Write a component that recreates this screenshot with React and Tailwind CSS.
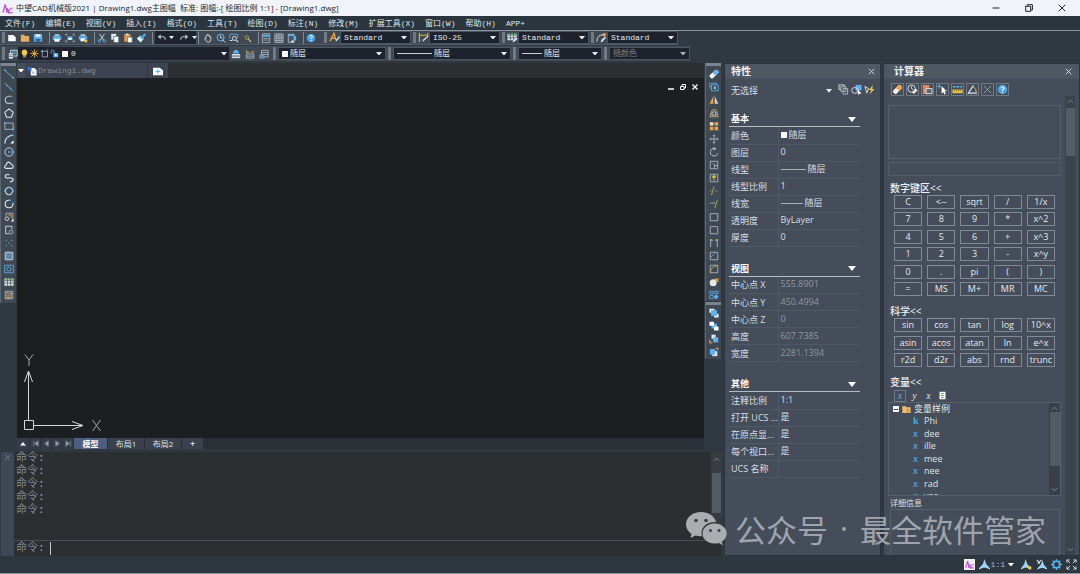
import clsx from "clsx";

const W = "#dde5ec";
const B = "#5db2f0";
const O = "#eba546";
const Y = "#f0c53c";
const G = "#b4bdc6";

// every glyph is drawn on a 12x12 grid
const ICONS = {
  newFile: <path d="M1.5 2.5h6l3 2.5v5h-9z" fill="#fff" />,
  open: <path d="M1 2h4l1 1.5h5V10.500H1z" fill="#e9a95f" />,
  save: (
    <>
      <path d="M1 1.500h10v9H1z" fill={B} />
      <path d="M3 1.500h6v3H3z" fill="#e8f2fa" />
      <path d="M3 7h6v3.500H3z" fill="#3b5f8a" />
    </>
  ),
  print: (
    <>
      <path d="M3 1.500h6V4H3z" fill="#9dcdf4" />
      <path d="M1 4h10v4.500H1z" fill={B} />
      <path d="M3 7h6v3.500H3z" fill="#fff" />
    </>
  ),
  preview: (
    <>
      <path d="M1 3.500V1.500h2M9 1.500h2v2M11 8.500v2H9M3 10.500H1v-2" stroke={G} fill="none" />
      <path d="M3 4h6v4.500H3z" fill={B} />
      <path d="M4 6h4v2H4z" fill="#fff" />
    </>
  ),
  plot: (
    <>
      <path d="M3 1.500h6V4H3z" fill="#9dcdf4" />
      <path d="M1 4h10v4H1z" fill={B} />
      <path d="M3 6.500h5v3.500H3z" fill="#fff" />
      <circle cx="9.500" cy="9.500" r="1.800" fill={Y} />
    </>
  ),
  cut: (
    <>
      <path d="M3 1l5 7.500M9 1L4 8.500" stroke={W} fill="none" />
      <circle cx="3" cy="9.500" r="1.500" stroke={B} fill="none" />
      <circle cx="9" cy="9.500" r="1.500" stroke={B} fill="none" />
    </>
  ),
  copy: (
    <>
      <path d="M1.500 1h6v7h-6z" fill="#e4ebf1" />
      <path d="M4.500 4h6v7.500h-6z" fill="#fff" stroke="#4b5562" strokeWidth=".8" />
    </>
  ),
  paste: (
    <>
      <path d="M1.500 1.500h7.500v9H1.500z" fill="#e59a52" />
      <path d="M3.500.8h3v1.700h-3z" fill="#fff" />
      <path d="M5.500 5h5.500v6.500H5.500z" fill="#fff" stroke="#4b5562" strokeWidth=".7" />
    </>
  ),
  brush: (
    <>
      <path d="M7 3.500l3.500-3L12 2 9 5.500z" fill={B} />
      <path d="M5 3l4.500 4-4 4.500-4.500-5z" fill="#eaf4fc" />
      <path d="M5 3l4.500 4-1.300 1.500-4.700-4.200z" fill={B} />
    </>
  ),
  undo: (
    <>
      <path d="M1 5l4-3.500v7z" fill="#b5bec6" />
      <path d="M4 5h4q3 0 3 4" stroke="#b5bec6" strokeWidth="1.500" fill="none" />
    </>
  ),
  redo: (
    <>
      <path d="M11 5L7 1.500v7z" fill="#b5bec6" />
      <path d="M8 5H4Q1 5 1 9" stroke="#b5bec6" strokeWidth="1.500" fill="none" />
    </>
  ),
  pan: (
    <path
      d="M3.500 7V3.500q.7-1 1.400 0V2q.8-1 1.500 0v1q.8-1 1.500 0v1.500q.8-.8 1.400 0V8q0 3-2.500 3H6Q4.500 11 2 7q.3-1 1.500 0z"
      stroke={W}
      fill="none"
    />
  ),
  orbit: (
    <>
      <circle cx="5.500" cy="5.500" r="4" stroke={B} strokeWidth="1.300" fill="none" />
      <path d="M5.500 3v3h2.500M8.500 8.500L11 11.500" stroke={W} fill="none" />
    </>
  ),
  zoomWin: (
    <>
      <path d="M1 7V1.500h9.500V6" stroke={B} fill="none" />
      <circle cx="6.500" cy="6.500" r="2.500" stroke={W} fill="#4d5865" />
      <path d="M8.500 8.500l2.500 2.500M1 9h3" stroke={W} strokeWidth="1.300" fill="none" />
    </>
  ),
  zoomPrev: (
    <>
      <path d="M1 2l2.500 2.500" stroke="#8a949e" strokeDasharray="1 1" fill="none" />
      <circle cx="6" cy="5.500" r="2" stroke="#b9a950" fill="none" />
      <path d="M7.500 7L11 11" stroke="#cfc48b" strokeWidth="1.300" fill="none" />
    </>
  ),
  calc: (
    <>
      <path d="M1.500 1h9v10.500h-9z" stroke={G} fill="#3a4653" />
      <path d="M2.500 2h7v2.500h-7z" fill={B} />
      <path d="M3 6.500h6M3 8.500h6" stroke={W} strokeDasharray="1.500 .8" />
    </>
  ),
  grid: (
    <path d="M1 1h10v10.500H1zM1 3.600h10M1 6.200h10M1 8.800h10M3.500 1v10.500M6 1v10.500M8.500 1v10.500" stroke="#c8d0d8" strokeWidth=".8" fill="none" />
  ),
  palette: (
    <>
      <path d="M1.500 1.500h7v10h-7z" stroke={G} fill="#46586c" />
      <path d="M1.500 1.500h7v2h-7z" fill={B} />
      <path d="M8.500 3.500h2.500v5.500H8.500z" fill={B} />
      <path d="M5 9h3v2H5z" fill={W} />
    </>
  ),
  help: (
    <>
      <circle cx="6" cy="6" r="5.200" fill="#49a3ea" />
      <path d="M4.300 4.700q.2-1.700 1.800-1.700T7.800 4.600Q7.800 5.500 6 6.500v.8M6 8.300v1.200" stroke="#fff" fill="none" strokeWidth="1.200" />
    </>
  ),
  textStyle: (
    <>
      <path d="M1 10L5.500 1.500l1.800 7M3 7h4" stroke={O} strokeWidth="1.500" fill="none" />
      <path d="M7 11l1-3 3-3.500 1 1-2.800 3.500z" fill={W} />
    </>
  ),
  dimStyle: (
    <>
      <path d="M1.500 1v10M10.500 1v4M1.500 3.500h9" stroke={Y} fill="none" />
      <path d="M4.500 11l1.500-3 4.500-4 1 1-4.500 4z" fill={W} />
    </>
  ),
  tableStyle: (
    <>
      <path d="M.5 2h10v7H.5z" fill="#dde5ec" />
      <path d="M.5 2h10v2H.5z" fill="#6aa86c" />
      <path d="M.5 6.300h10M3.800 2v7M7.200 2v7" stroke="#4b5562" strokeWidth=".8" />
      <path d="M6 11.500l1-2.500 3.500-3 1.200 1L8.500 10z" fill="#fff" stroke="#4b5562" strokeWidth=".3" />
    </>
  ),
  leaderStyle: (
    <>
      <path d="M1 10.500Q1 3 8 3" stroke={W} fill="none" />
      <circle cx="9" cy="3" r="2" fill={O} />
      <path d="M5 11.500l1-3 4-3.500 1 1L7.500 10z" fill={W} />
    </>
  ),
  layers: (
    <>
      <path d="M3 1.500h8v7H3z" stroke={W} fill="#4a5662" />
      <path d="M4.500 3.500h5M4.500 5.500h5" stroke={B} />
      <path d="M1 5h5v6.500H1z" fill="#dfe7ee" />
      <path d="M1 7h5M1 9h5" stroke="#4a5662" strokeWidth=".8" />
    </>
  ),
  bulb: (
    <>
      <path d="M6 .8a4 4 0 0 1 2.200 7.200V9H3.800V8A4 4 0 0 1 6 .8z" fill="#f3cd45" />
      <path d="M4.200 9.500h3.600v1.700H4.200z" fill="#c99a2c" />
    </>
  ),
  sun: (
    <>
      <path d="M6 .5v11M.5 6h11M2 2l8 8M10 2l-8 8" stroke="#e2a93c" strokeWidth="1.200" />
      <circle cx="6" cy="6" r="2.800" fill="#e2a93c" stroke="#33363a" strokeWidth=".6" />
    </>
  ),
  freeze: <path d="M3 3h7v7.500H3zM1 3h3M3 1v3M8.500 1.500H11" stroke={G} fill="none" />,
  unlock: (
    <>
      <path d="M1.500 6V3.500q0-2 2-2t2 2V6" stroke={B} strokeWidth="1.300" fill="none" />
      <path d="M4.500 5.500h6.500V11H4.500z" fill={B} />
      <circle cx="7.700" cy="8" r="1.200" fill="#fff" />
    </>
  ),
  layerSet: (
    <>
      <path d="M1 6h10v5H1z" fill="#cfd9e2" />
      <path d="M1 8.500h10" stroke="#4a5662" />
      <path d="M2.500 5.500q0-4 3.500-4.500 3.500.5 3.500 4.500z" fill={B} />
    </>
  ),
  layerPrev: (
    <>
      <path d="M1.500 6h9v5h-9zM1.500 8.500h9" stroke={G} fill="none" />
      <path d="M2 1.500v2.500h3M7 3.500h4" stroke={Y} fill="none" />
    </>
  ),
  layerState: (
    <>
      <path d="M3 1.500h8v8H3zM3 4h8M3 6.500h8" stroke={G} fill="none" />
      <path d="M1 7h5v4H1z" fill="#5682ab" stroke={G} strokeWidth=".6" />
    </>
  ),
  line: (
    <>
      <path d="M1 1.500l10 9" stroke="#73b9d8" />
      <path d="M0 .5h2v2H0zM10 9.500h2v2h-2z" fill={B} />
    </>
  ),
  xline: (
    <>
      <path d="M1 1.500l10 9.500" stroke="#73b9d8" />
      <path d="M3 3.500h1.600v1.600H3zM7 7h1.600v1.600H7z" fill={B} />
    </>
  ),
  pline: (
    <>
      <path d="M9.500 1.500H6Q1.500 2 1.500 6t4 4h5" stroke={G} strokeWidth="1.400" fill="none" />
      <path d="M9 9h2.500v2H9z" fill={B} />
    </>
  ),
  polygon: <path d="M6 1l5 4-2 6H3L1 5z" stroke={W} strokeWidth="1.300" fill="none" />,
  rect: (
    <>
      <path d="M1 2.500h10v7.500H1z" stroke={G} fill="none" />
      <path d="M0 1.500h2.300v2H0zM9.500 9H12v2H9.500z" fill={B} />
    </>
  ),
  arc: (
    <>
      <path d="M1 11Q1.500 2.500 10.500 1.500" stroke={W} strokeWidth="1.300" fill="none" />
      <path d="M0 9.500h2v2H0zM3.500 3h2v2h-2zM9.500 .5h2v2h-2z" fill={B} />
      <path d="M11.500 7.500v4h-4z" fill="#fff" />
    </>
  ),
  circle: (
    <>
      <circle cx="6" cy="6" r="5" stroke={W} fill="none" />
      <path d="M5 5h2v2H5zM10 5h2v2h-2z" fill={B} />
      <path d="M6 6h5" stroke={B} />
    </>
  ),
  cloud: (
    <path d="M2.500 10Q0 9.500 1 7.500 1.500 6 3 5.800 3 2.500 5.500 2.500T8.500 5q3 1 2.500 3 0 2-2 2z" stroke={W} strokeWidth="1.300" fill="none" />
  ),
  spline: <path d="M6.500 2Q1 1 1.500 4.500 2 6.500 6 6t5 1.500q0 3-4 3" stroke={W} strokeWidth="1.400" fill="none" />,
  ellipse: (
    <>
      <circle cx="6" cy="6" r="4.300" stroke={W} strokeWidth="1.300" fill="none" />
      <path d="M0 5h2.500v2H0zM9.500 5H12v2H9.500zM5 .5h2v2H5zM5 9.500h2v2H5z" fill={B} />
    </>
  ),
  ellipseArc: (
    <>
      <path d="M6 1.500Q1.500 1.500 1.500 6T6 10.500 10.500 6" stroke={W} strokeWidth="1.300" fill="none" />
      <path d="M5.500.5h2.500v2H5.500zM9.500 4.500H12v2H9.500z" fill={B} />
    </>
  ),
  insert: (
    <>
      <path d="M2.500 5V1.500h8v8" stroke={G} fill="none" />
      <path d="M5 3.500h3.500V7" stroke={O} fill="none" />
      <circle cx="3.500" cy="8" r="2.200" stroke={W} fill="none" />
      <path d="M11.500 8v3.500H8z" fill="#fff" />
    </>
  ),
  block: (
    <>
      <path d="M6 10.500H2V1.500h7.500V5" stroke={W} fill="none" />
      <circle cx="8.500" cy="8.500" r="2.300" stroke={G} fill="none" />
    </>
  ),
  points: (
    <path d="M2 2h1.500v1.500H2zM8.500 2H10v1.500H8.500zM5.200 5.200h1.600v1.600H5.200zM2 8.500h1.500V10H2zM8.500 8.500H10V10H8.500z" fill="#45a9a0" />
  ),
  hatch: (
    <>
      <path d="M1.500 1.500h9v9h-9z" stroke={W} fill="#5c7f9e" />
      <path d="M2 6l4-4M2 10l8-8M6 10l4-4" stroke="#8cb4d3" strokeWidth=".7" />
    </>
  ),
  region: (
    <>
      <path d="M.8 1.500h10.400v9H.8z" stroke={B} fill="none" />
      <circle cx="6" cy="6" r="2.500" stroke={B} fill="none" />
    </>
  ),
  table: (
    <>
      <path d="M.5 2h11v8.500H.5z" fill="#dfe6e4" />
      <path d="M.5 2h11v2.200H.5z" fill="#93b98d" />
      <path d="M.5 4.500h11M.5 7.300h11M4.200 2v8.500M7.800 2v8.500" stroke="#3f4954" strokeWidth=".8" />
    </>
  ),
  mtext: (
    <>
      <path d="M1.500 1.500h9v9h-9z" stroke={G} fill="#59636e" />
      <path d="M3 5l1.500-2L6 5M3 7h6M3 9h6" stroke={O} fill="none" strokeWidth=".9" />
      <path d="M7 4.500h2.500" stroke={W} />
    </>
  ),
  erase: (
    <g transform="rotate(-42 6 6)">
      <rect x="0" y="3.500" width="12" height="5.200" rx="2" fill="#fff" />
      <path d="M6 3.500h4q2 0 2 2v1.200q0 2-2 2H6z" fill={B} />
    </g>
  ),
  offset: (
    <>
      <path d="M1 8V1.500h8V3" stroke={B} fill="none" />
      <path d="M3 3.500h8v7H3z" stroke={B} fill="none" />
      <path d="M5.500 5.500h3v3h-3z" fill="#79bff0" />
    </>
  ),
  mirror: (
    <>
      <path d="M5 1.500V10.500H.8z" fill={O} />
      <path d="M7 1.500V10.500h4.200z" fill="#d9d2c5" />
      <path d="M6 .5v11" stroke="#8b949d" strokeWidth=".6" />
    </>
  ),
  offset2: (
    <>
      <path d="M1 10.500L3.500 3Q6 0 9 3l2 7.500z" stroke="#d7b765" fill="none" />
      <path d="M3.500 8.500V7Q4 4.500 6 4.300T8.500 7v1.500z" stroke={W} fill="none" />
    </>
  ),
  array: (
    <>
      <path d="M1 1.500h4.300v4H1z" fill="#f3e2c5" />
      <path d="M6.700 1.500H11v4H6.700zM1 7h4.300v4H1zM6.700 7H11v4H6.700z" fill={O} />
    </>
  ),
  move: (
    <path d="M6 1v10M1 6h10M4.500 2.500L6 1l1.500 1.500M4.500 9.500L6 11l1.500-1.500M2.500 4.500L1 6l1.500 1.500M9.500 4.500L11 6 9.500 7.500" stroke={G} fill="none" />
  ),
  rotate: (
    <>
      <path d="M7 1.800A4.500 4.500 0 1 0 10.500 7.500" stroke={G} strokeWidth="1.200" fill="none" />
      <path d="M5.500 0l3.500 2L5.500 4.500z" fill={G} />
    </>
  ),
  scale: <path d="M1.500 1.500h9v9h-9zM10.500 6.500H6.500v4M4.500 4l3.500 3.500" stroke={G} fill="none" />,
  stretch: (
    <>
      <path d="M1.500 1.500h9v9h-9z" stroke={G} fill="none" />
      <path d="M6 9V3.500M3.700 5.500L6 3l2.300 2.500" stroke="#d9d04a" strokeWidth="1.300" fill="none" />
    </>
  ),
  trim: (
    <>
      <path d="M6 1L3 11" stroke="#c8b84e" />
      <path d="M1 6h3M7 6h4" stroke="#9aa5ae" strokeDasharray="2 1" />
    </>
  ),
  extend: (
    <>
      <path d="M10 1L7 11" stroke="#c8b84e" />
      <path d="M1 5h6M5 3.500L7.500 5" stroke="#9aa5ae" />
    </>
  ),
  breakAt: <path d="M1.500 2h9v8.500h-9z" stroke={G} fill="none" />,
  breakTwo: (
    <>
      <path d="M1.500 2h9v8.500h-9z" stroke={G} fill="none" />
      <path d="M1 1.500h1.500V3H1zM9.500 9.500H11V11H9.500z" fill="#d26a75" />
    </>
  ),
  join: (
    <>
      <path d="M2 11V3h2.500M10 11V3H7.500" stroke={G} fill="none" />
      <path d="M1 2h3M8 2h3" stroke="#c8b84e" strokeWidth="1.300" />
    </>
  ),
  chamfer: (
    <>
      <path d="M1.500 1.500h9v9h-9z" stroke={G} fill="none" />
      <path d="M1.500 8l7-6.500" stroke="#7ba5c4" />
    </>
  ),
  fillet: (
    <>
      <path d="M1.500 1.500h9v9h-9z" stroke={G} fill="none" />
      <path d="M1.500 10.500Q2 3 10 2" stroke="#c8a84e" fill="none" />
    </>
  ),
  explode: (
    <>
      <circle cx="5" cy="7" r="4.200" fill="#e3e6e4" />
      <path d="M7 3.500l1-2.500 1.200 1.500L12 1.500 10.800 4 12 6 9.500 5.500z" fill={O} />
    </>
  ),
  blockEdit: (
    <>
      <path d="M1 1.500h4v3H1zM7 1.500h4v3H7zM1 6.500h4v4H1z" stroke={B} fill="none" />
      <path d="M5.500 8l3-3 3 3-3 3.500z" fill={B} />
    </>
  ),
  front: (
    <>
      <path d="M.5 .8h6v5h-6zM6 7h5.500v4.500H6z" fill="#e9f1f8" />
      <path d="M2.500 2.500h7v7h-7z" fill={B} />
    </>
  ),
  back: (
    <>
      <path d="M3 3h6.500v6H3z" fill={B} />
      <path d="M.5 .8h5.500v5H.5zM6 6.500h5.500v5H6z" fill="#fff" />
    </>
  ),
  above: (
    <>
      <path d="M3 .8h5v5H3z" fill={W} />
      <path d="M5 4h6v6H5z" fill={B} />
      <path d="M1 7v3.500h3" stroke={O} fill="none" strokeWidth="1.300" />
    </>
  ),
  below: (
    <>
      <path d="M4 5h6v6H4z" fill={W} />
      <path d="M1 2.500h6.500V9H1z" fill={B} />
      <path d="M8 1.500h2.500V4" stroke={O} fill="none" strokeWidth="1.300" />
    </>
  ),
  quick: (
    <>
      <path d="M1 1h6v5H1z" stroke={W} fill="none" />
      <path d="M3 3h5.500v5H3zM5.500 5h5v6h-5z" stroke={G} fill="#47515d" />
    </>
  ),
  pick: (
    <>
      <path d="M5 1h6.500v6H5z" fill={B} />
      <circle cx="4" cy="7" r="3.200" stroke={W} fill="none" />
      <path d="M7.500 6l4 4.500H9L7.500 12z" fill="#fff" />
    </>
  ),
  flash: (
    <>
      <path d="M1 2.500l5 3.500-2 .6L3 10z" stroke={W} fill="none" />
      <path d="M9.500 1L5.500 6.500h2.500L6 11.500l5.500-6H9z" fill={Y} />
    </>
  ),
  clear: (
    <g transform="rotate(-45 6 6)">
      <rect x=".5" y="3.500" width="11" height="5" rx="1.500" fill="#f5f1ea" />
      <path d="M6 3.500h4q1.500 0 1.500 1.500v2q0 1.500-1.500 1.500H6z" fill={O} />
    </g>
  ),
  history: (
    <>
      <circle cx="5" cy="5" r="4" stroke={W} fill="none" />
      <path d="M5 2.500V5l2 1" stroke={W} fill="none" />
      <path d="M5.500 9L9.500 5l2 2-4 4z" fill="#f2e8da" />
    </>
  ),
  pasteCmd: (
    <>
      <path d="M1 1h7v10H1z" fill="#d98a5e" />
      <path d="M4.500 5H11v5.500H4.500z" fill="#5b6672" stroke={W} />
    </>
  ),
  coord: (
    <>
      <path d="M2.500 0v5M0 2.500h5" stroke={B} />
      <path d="M5 2.500l6 5.500H8.500l1 3-1.500.5L7 8.800 5 10.500z" fill="#fff" />
    </>
  ),
  dist: (
    <>
      <path d="M1 3h10" stroke={B} strokeDasharray="3 1" strokeWidth="1.500" />
      <path d="M.5 6h11v4H.5z" fill={Y} />
      <path d="M3 6v2M5 6v2M7 6v2M9 6v2" stroke="#5a4a1a" strokeWidth=".7" />
    </>
  ),
  angle: (
    <>
      <path d="M7 1.500L1.500 10H11" stroke={W} fill="none" strokeWidth="1.300" />
      <path d="M7 3q3.500 2.500 3 6" stroke={Y} fill="none" />
    </>
  ),
  cross: <path d="M2 2l8 8M10 2l-8 8" stroke="#9aa4ae" fill="none" />,
  doc: (
    <>
      <path d="M4.500 2.500H9l2.500 2.500v6.500h-7z" fill="#fff" />
      <path d="M0 1.500h5.500v4.500H2z" fill="#2f6fe0" />
      <path d="M6 6.500h3v3H6z" fill="#a9c9ee" />
    </>
  ),
  newTab: (
    <>
      <path d="M0 2h8l4 3v6H0z" fill="#fff" />
      <path d="M6 4v5M3.500 6.500h5" stroke={B} strokeWidth="1.300" />
    </>
  ),
  folder: (
    <>
      <path d="M.5 1.500h4.500l1 1.500h5.500v7.500H.5z" fill="#efbe6a" />
      <path d="M6 5h4v5H6z" fill="#d69d45" />
    </>
  ),
  listDoc: (
    <>
      <path d="M2 1h8v10H2z" fill="#fff" />
      <path d="M4 3.500h4M4 6h4M4 8.500h4" stroke="#65707c" />
    </>
  ),
  scaleMark: (
    <path d="M6 0l1.800 5.500L12 10v1.500L7.500 9.500H4.500L0 11.500V10l4.200-4.500z" fill="#9fd2f5" />
  ),
  scaleVis: (
    <>
      <path d="M5 0l1.800 5.500L11 10v1.500L6.500 9.500H4L0 11.500V10l3.500-4.500z" fill="#9fd2f5" />
      <circle cx="9.500" cy="9.500" r="2" fill={Y} />
    </>
  ),
  scaleAuto: (
    <>
      <path d="M7 1l1.500 5L12 10v1.500L8 9.800H5.500L1.500 11.500V10L5.300 6z" fill="#9fd2f5" />
      <path d="M1 1l3 4M6 1L2 5" stroke={W} strokeWidth="1.200" />
    </>
  ),
  gear: (
    <>
      <circle cx="6" cy="6" r="3.600" stroke="#4fb0f3" strokeWidth="2" fill="none" />
      <path d="M6 0v2M6 10v2M0 6h2M10 6h2M1.800 1.800l1.400 1.400M8.800 8.800l1.400 1.400M10.200 1.800L8.800 3.200M3.200 8.800l-1.400 1.400" stroke="#4fb0f3" strokeWidth="1.500" />
    </>
  ),
  full: (
    <path d="M1 4V1h3M8 1h3v3M11 8v3H8M4 11H1V8M1 1l3.500 3.500M11 1L7.500 4.500M11 11L7.500 7.500M1 11l3.500-3.500" stroke={W} fill="none" />
  ),
};

function Icon({ name, className = "size-[11px]" }) {
  return (
    <svg viewBox="0 0 12 12" className={clsx("shrink-0 block", className)} aria-hidden="true">
      {ICONS[name]}
    </svg>
  );
}

function Logo({ className }) {
  return (
    <svg viewBox="0 0 12 12" className={className} aria-hidden="true">
      <path d="M1 10.500L3.500 1.500 5 8V10.500M5.500 5.500L7 10.500l1.500-4M8 10.500h3.500" stroke="#b94bdc" strokeWidth="1.400" fill="none" />
      <path d="M1 6.500h4M8.500 6.500l2.500-1v2.500" stroke="#e57ae0" strokeWidth="1.100" fill="none" />
    </svg>
  );
}

function Tri({ className = "w-[6px] text-[#e3e9ee]" }) {
  return (
    <svg viewBox="0 0 8 5" className={clsx("shrink-0 pointer-events-none", className)} aria-hidden="true">
      <path d="M0 0h8L4 5z" fill="currentColor" />
    </svg>
  );
}

function IconButton({ name, className, size }) {
  return (
    <button type="button" aria-label={name} className={clsx("flex items-center justify-center", className)}>
      <Icon name={name} className={size} />
    </button>
  );
}

function Tools({ names, className }) {
  return (
    <div className={clsx("flex items-center", className)}>
      {names.map((n) => (
        <IconButton key={n} name={n} className="w-[13px] h-[13px]" size="size-[10px]" />
      ))}
    </div>
  );
}

function Sep() {
  return <span className="w-px h-3 ml-[5px] bg-[#7d8893]" />;
}

function Grip() {
  return <span className="w-[3px] self-stretch my-px mx-[2px] bg-[#6f7a86]" />;
}

function Combo({ label, value, line, swatch, disabled, className }) {
  return (
    <label
      className={clsx(
        "flex items-center h-[13px] px-[3px] border border-[#4b5560] bg-[#1d222d]",
        disabled ? "text-[#7c848d]" : "text-[#e3e9ee]",
        className
      )}
    >
      {swatch && <span className="size-[6px] mr-[2px] bg-white shrink-0" />}
      {line && <span className={clsx("h-px mr-[2px] bg-[#c9d0d6] shrink-0", line)} />}
      <select aria-label={label} disabled={disabled} className="appearance-none flex-1 min-w-0 leading-[11px] outline-none">
        <option>{value}</option>
      </select>
      <Tri className={clsx("w-[6px]", disabled ? "text-[#a7aeb5]" : "text-[#e3e9ee]")} />
    </label>
  );
}

const MENUS = [
  "文件(F)", "编辑(E)", "视图(V)", "插入(I)", "格式(O)", "工具(T)", "绘图(D)", "标注(N)",
  "修改(M)", "扩展工具(X)", "窗口(W)", "帮助(H)", "APP+",
];

const DRAW = [
  "line", "xline", "pline", "polygon", "rect", "arc", "circle", "cloud", "spline", "ellipse",
  "ellipseArc", "insert", "block", "points", "hatch", "region", "table", "mtext",
];

const MODIFY = [
  "erase", "offset", "mirror", "offset2", "array", "move", "rotate", "scale", "stretch", "trim",
  "extend", "breakAt", "breakTwo", "join", "chamfer", "fillet", "explode", "blockEdit",
];

const SECTIONS = [
  {
    title: "基本",
    rows: [
      { name: "颜色", value: "随层", swatch: true },
      { name: "图层", value: "0" },
      { name: "线型", value: "随层", line: "w-[25px]" },
      { name: "线型比例", value: "1" },
      { name: "线宽", value: "随层", line: "w-[22px]" },
      { name: "透明度", value: "ByLayer" },
      { name: "厚度", value: "0" },
    ],
  },
  {
    title: "视图",
    dim: true,
    rows: [
      { name: "中心点 X", value: "555.8901" },
      { name: "中心点 Y", value: "450.4994" },
      { name: "中心点 Z", value: "0" },
      { name: "高度", value: "607.7385" },
      { name: "宽度", value: "2281.1394" },
    ],
  },
  {
    title: "其他",
    rows: [
      { name: "注释比例", value: "1:1" },
      { name: "打开 UCS ...", value: "是" },
      { name: "在原点显...", value: "是" },
      { name: "每个视口...", value: "是" },
      { name: "UCS 名称", value: "" },
    ],
  },
];

const NUM_KEYS = [
  "C", "<--", "sqrt", "/", "1/x",
  "7", "8", "9", "*", "x^2",
  "4", "5", "6", "+", "x^3",
  "1", "2", "3", "-", "x^y",
  "0", ".", "pi", "(", ")",
  "=", "MS", "M+", "MR", "MC",
];

const SCI_KEYS = [
  "sin", "cos", "tan", "log", "10^x",
  "asin", "acos", "atan", "ln", "e^x",
  "r2d", "d2r", "abs", "rnd", "trunc",
];

const VARS = ["Phi", "dee", "ille", "mee", "nee", "rad", "vee"];

function TitleBar() {
  return (
    <header className="flex items-center h-4 pl-[2px] pr-[14px] bg-[#f0f4fa] text-[#23272c] text-[8px] leading-4">
      <Logo className="size-[11px] mr-[3px]" />
      <h1 className="flex-1 whitespace-pre">
        中望CAD机械版2021 | Drawing1.dwg主图幅  标准: 图幅:-[ 绘图比例 1:1] - [Drawing1.dwg]
      </h1>
      <div className="flex items-center gap-[25px]">
        <button type="button" aria-label="Minimize" className="w-2 flex justify-center">
          <svg viewBox="0 0 8 8" className="size-2"><path d="M0.500 4h7" stroke="#222" /></svg>
        </button>
        <button type="button" aria-label="Restore" className="w-2 flex justify-center">
          <svg viewBox="0 0 8 8" className="size-2">
            <path d="M.7 2.300h5v5h-5zM2.300 2V.7H7.400V6H6" stroke="#222" fill="none" />
          </svg>
        </button>
        <button type="button" aria-label="Close" className="w-2 flex justify-center">
          <svg viewBox="0 0 8 8" className="size-2"><path d="M.8.8l6.400 6.400M7.200.8L.8 7.200" stroke="#222" /></svg>
        </button>
      </div>
    </header>
  );
}

function MenuBar() {
  return (
    <nav className="flex items-center h-[15px] bg-[#2b353d] border-b border-[#8b959d] text-[8px] leading-[13px] text-[#dfe5ea] font-['Liberation_Mono','Noto_Sans_CJK_SC',monospace]">
      {MENUS.map((m) => (
        <button key={m} type="button" className="px-[5px] whitespace-nowrap">
          {m}
        </button>
      ))}
    </nav>
  );
}

function Toolbars() {
  return (
    <div className="text-[8px] font-['Liberation_Mono','Noto_Sans_CJK_SC',monospace] bg-[#303841] pb-[2px]">
      <div className="flex">
        <div className="flex items-center h-[14px] pr-[5px] bg-[#3f4954] border-b border-[#525d68]">
          <Grip />
          <Tools names={["newFile", "open", "save"]} className="-ml-[2px]" />
          <Sep />
          <Tools names={["print", "preview", "plot"]} />
          <Sep />
          <Tools names={["cut", "copy", "paste", "brush"]} />
          <Sep />
          <div className="flex items-center gap-[3px] h-[13px] w-[41px] mx-[2px] px-[2px] bg-[#1d222d]">
            <IconButton name="undo" size="size-[9px]" />
            <Tri className="w-[5px] text-[#e3e9ee]" />
            <span className="flex-1" />
            <IconButton name="redo" size="size-[9px]" />
            <Tri className="w-[5px] text-[#e3e9ee]" />
          </div>
          <span className="w-px h-3 mr-[2px] bg-[#7d8893]" />
          <Tools names={["pan", "orbit", "zoomWin", "zoomPrev"]} />
          <Sep />
          <Tools names={["calc", "grid", "palette"]} />
          <Sep />
          <Tools names={["help"]} />
        </div>
        {[
          ["textStyle", "Standard"],
          ["dimStyle", "ISO-25"],
          ["tableStyle", "Standard"],
          ["leaderStyle", "Standard"],
        ].map(([icon, value]) => (
          <div key={icon} className="flex items-center h-[14px] bg-[#3f4954] border-b border-[#525d68]">
            <Grip />
            <Icon name={icon} className="size-[11px]" />
            <Combo label={icon} value={value} className="w-[71px]" />
          </div>
        ))}
      </div>
      <div className="flex mt-px">
        <div className="flex items-center h-[15px] pr-px bg-[#3f4954]">
          <Grip />
          <IconButton name="layers" size="size-[10px]" className="w-[11px]" />
          <div className="flex items-center h-[13px] w-[211px] px-[2px] gap-px bg-[#1d222d]">
            {["bulb", "sun", "freeze", "unlock"].map((n) => (
              <IconButton key={n} name={n} size="size-[9px]" />
            ))}
            <span className="size-[6px] ml-[2px] mr-[2px] bg-white" />
            <select aria-label="Layer" className="appearance-none flex-1 text-[#e3e9ee] outline-none">
              <option>0</option>
            </select>
            <Tri />
          </div>
          <Tools names={["layerSet", "layerPrev", "layerState"]} className="gap-px" />
        </div>
        <div className="flex items-center h-[15px] bg-[#3f4954]">
          <Grip />
          <Combo label="Color" value="随层" swatch className="w-[108px]" />
          <Grip />
          <Combo label="Linetype" value="随层" line="w-[35px]" className="w-[118px]" />
          <Grip />
          <Combo label="Lineweight" value="随层" line="w-[20px]" className="w-[84px]" />
          <Grip />
          <Combo label="Plot style" value="随颜色" disabled className="w-[81px]" />
        </div>
      </div>
    </div>
  );
}

function SideTools({ names, className }) {
  return (
    <div className={clsx("flex flex-col items-center border-l border-[#5c6772] bg-[#3f4954]", className)}>
      <span className="h-[3px] self-stretch mb-px bg-[#7a8590]" />
      {names.map((n) => (
        <IconButton key={n} name={n} className="w-[13px] h-[13px]" size="size-[10px]" />
      ))}
    </div>
  );
}

function Ucs() {
  return (
    <svg viewBox="0 0 84 84" className="size-[84px]" aria-label="UCS">
      <g stroke="#d4d8db" fill="none">
        <path d="M4.500 66.500h9v9h-9zM8.500 66V18M14 71.500h48M8.500 17L4.500 28M8.500 17l4 11M63 71.500L52 67.500M63 71.500L52 75.500" />
        <path d="M5 .5L9 6l4-5.500M9 6v6M72.500 66l8 11M80.500 66l-8 11" stroke="#a3a8ac" />
      </g>
    </svg>
  );
}

function Drawing() {
  return (
    <section className="flex-1 min-w-0 flex flex-col bg-[#1b1f22]">
      <div className="flex h-[15px] bg-[#2b2f32] text-[8px] font-['Liberation_Mono',monospace]">
        <button type="button" aria-label="Drawings" className="w-[8px] flex items-center justify-center bg-[#454e5a]">
          <Tri className="w-[6px] text-white" />
        </button>
        <div className="flex items-center w-[123px] pl-[2px] gap-px bg-[#3d4350] border-r border-[#2f343e] text-[#858c94]">
          <Icon name="doc" className="size-[10px]" />
          <span>Drawing1.dwg</span>
        </div>
        <button type="button" aria-label="New drawing" className="w-[20px] flex items-center justify-center bg-[#3d4350]">
          <Icon name="newTab" className="size-[10px]" />
        </button>
      </div>
      <div className="flex-1 flex flex-col justify-between">
        <div className="flex justify-end gap-[6px] pt-[6px] pr-[6px]">
          <svg viewBox="0 0 6 6" className="size-[6px]"><path d="M0 5h6" stroke="#fff" strokeWidth="1.500" /></svg>
          <svg viewBox="0 0 6 6" className="size-[6px]">
            <path d="M.5 2.500h3.500v3H.5zM2 2V.5h3.500V4H4" stroke="#fff" fill="none" />
          </svg>
          <svg viewBox="0 0 6 6" className="size-[6px]"><path d="M.5.5l5 5M5.500.5l-5 5" stroke="#fff" strokeWidth="1.300" /></svg>
        </div>
        <div className="pl-[3px]">
          <Ucs />
        </div>
      </div>
      <div className="flex gap-px h-[11px] bg-[#2b2f36] text-[8px] leading-[11px] text-[#dfe4e9]">
        <button type="button" aria-label="Menu" className="w-[12px] flex items-center justify-center bg-[#363d48]">
          <Tri className="w-[6px] rotate-180 text-white" />
        </button>
        {["M2 1v6M7 1L3 4l4 3z", "M6 1L2 4l4 3z", "M2 1l4 3-4 3z", "M1 1l4 3-4 3zM6.500 1v6"].map((d) => (
          <button key={d} type="button" aria-label="Scroll tabs" className="w-[10px] flex items-center justify-center bg-[#363d48]">
            <svg viewBox="0 0 8 8" className="size-[7px]"><path d={d} fill="#8e98a3" stroke="#8e98a3" strokeWidth=".7" /></svg>
          </button>
        ))}
        <button type="button" className="w-[33px] bg-[#4c5f80] font-bold text-white">模型</button>
        <button type="button" className="w-[36px] bg-[#3a414d]">布局1</button>
        <button type="button" className="w-[36px] bg-[#3a414d]">布局2</button>
        <button type="button" className="w-[21px] bg-[#3a414d] font-bold">+</button>
      </div>
    </section>
  );
}

function Chevron({ up }) {
  return (
    <svg viewBox="0 0 8 8" className="size-[7px]" aria-hidden="true">
      <path d={up ? "M1 5.500l3-3 3 3" : "M1 2.500l3 3 3-3"} stroke="#87919b" fill="none" />
    </svg>
  );
}

function CommandLine() {
  return (
    <section className="flex h-[104px] mt-[3px] ml-px text-[11px] text-[#a9aeb3] font-['Liberation_Mono','Noto_Sans_CJK_SC',monospace]">
      <div className="w-[13px] pt-[2px] flex justify-center items-start bg-[#3d4854]">
        <button type="button" aria-label="Close command line">
          <svg viewBox="0 0 8 8" className="size-[7px]"><path d="M1 1l6 6M7 1L1 7" stroke="#7b8691" /></svg>
        </button>
      </div>
      <div className="flex-1 flex flex-col bg-[#2b2f31]">
        <div className="flex-1 flex">
          <ul className="flex-1 pl-[2px] leading-[13px] font-light">
            {[0, 1, 2, 3, 4].map((i) => (
              <li key={i}>命令:</li>
            ))}
          </ul>
          <div className="w-[10px] flex flex-col items-center pt-[4px] bg-[#363c41]">
            <Chevron up />
            <span className="w-[9px] h-[40px] mt-[10px] bg-[#505b64]" />
          </div>
        </div>
        <label className="flex items-center h-[16px] pl-[2px] border-t border-[#4a5056] font-light">
          命令:
          <span className="w-px h-[13px] ml-[5px] bg-[#c7ccd0]" />
          <input aria-label="命令" className="flex-1 outline-none" />
        </label>
      </div>
    </section>
  );
}

function PanelHeader({ title, className }) {
  return (
    <div className={clsx("flex items-center justify-between h-[15px] bg-[#4e5862] border-b border-[#4a5460]", className)}>
      <h2 className="text-[10px] leading-[14px] font-bold font-['Noto_Sans_CJK_SC',sans-serif] text-[#eef2f5]">{title}</h2>
      <button type="button" aria-label="Close">
        <svg viewBox="0 0 8 8" className="size-[7px]"><path d="M.8.8l6.400 6.400M7.200.8L.8 7.200" stroke="#e3e8ec" /></svg>
      </button>
    </div>
  );
}

function Properties() {
  return (
    <aside className="w-[157px] shrink-0 bg-[#444d59] border border-[#2b333b] text-[#d9dfe5] text-[9px]">
      <PanelHeader title="特性" className="pl-[6px] pr-[5px]" />
      <div className="flex items-center h-[24px] pl-[6px] pr-[5px]">
        <select aria-label="Selection" className="appearance-none flex-1 outline-none">
          <option>无选择</option>
        </select>
        <Tri />
        <div className="flex gap-[2px] pl-[6px] pb-[3px]">
          <IconButton name="quick" />
          <IconButton name="pick" />
          <IconButton name="flash" />
        </div>
      </div>
      <div className="pl-[4px] pr-[20px] -mt-[6px]">
        {SECTIONS.map((s) => (
          <section key={s.title} className="pt-[15px]">
            <h3 className="flex items-center justify-between h-[15px] pl-[2px] pr-[4px] border-b border-[#b4bcc3] text-[9px] font-bold text-white">
              {s.title}
              <Tri className="w-[8px] text-white" />
            </h3>
            <table className="w-full table-fixed border-collapse">
              <tbody>
                {s.rows.map((r) => (
                  <tr key={r.name} className="border-b border-[#4f5965]">
                    <th className="w-[49px] h-[17px] p-0 pl-[2px] border-r border-[#4f5965] font-normal text-left leading-[15px] whitespace-nowrap">
                      {r.name}
                    </th>
                    <td className={clsx("h-[17px] p-0 pl-[2px] pb-px leading-[14px]", s.dim && "text-[#8f98a2]")}>
                      <span className="flex items-center gap-[2px]">
                        {r.swatch && <span className="size-[6px] bg-white" />}
                        {r.line && <span className={clsx("h-px bg-[#aab2ba]", r.line)} />}
                        {r.value}
                      </span>
                    </td>
                  </tr>
                ))}
              </tbody>
            </table>
          </section>
        ))}
      </div>
    </aside>
  );
}

function Keys({ keys, className }) {
  return (
    <div className={clsx("grid grid-cols-5 gap-x-[5px] content-between mx-[6px]", className)}>
      {keys.map((k) => (
        <button key={k} type="button" className="h-[14px] border border-[#808a94] text-[9px] leading-[12px] text-[#e6ebef]">
          {k}
        </button>
      ))}
    </div>
  );
}

function KeyHeading({ children }) {
  return <h3 className="h-[14px] pl-[2px] text-[10px] leading-[14px] font-medium text-[#eef2f5]">{children}</h3>;
}

function Calculator() {
  return (
    <aside className="w-[197px] ml-[2px] shrink-0 flex flex-col bg-[#444d59] border border-[#2b333b] text-[#dfe5ea] text-[9px]">
      <PanelHeader title="计算器" className="pl-[10px] pr-[7px]" />
      <div className="flex-1 min-h-0 flex">
        <div className="w-[173px] ml-[4px] flex flex-col min-h-0">
          <div className="flex gap-[2px] pt-[4px] pl-[3px]">
            {["clear", "history", "pasteCmd", "coord", "dist", "angle", "cross", "help"].map((n) => (
              <IconButton key={n} name={n} className="size-[13px] border border-[#6f7983]" />
            ))}
          </div>
          <output className="h-[54px] mt-[9px] shrink-0 border border-[#56606a]" />
          <input aria-label="Expression" className="h-[14px] mt-[3px] shrink-0 border border-[#525c67] outline-none" />
          <div className="h-[5px] shrink-0" />
          <KeyHeading>数字键区&lt;&lt;</KeyHeading>
          <Keys keys={NUM_KEYS} className="h-[101px] shrink-0" />
          <div className="h-[8px] shrink-0" />
          <KeyHeading>科学&lt;&lt;</KeyHeading>
          <Keys keys={SCI_KEYS} className="h-[49px] shrink-0" />
          <div className="h-[8px] shrink-0" />
          <KeyHeading>变量&lt;&lt;</KeyHeading>
          <div className="flex items-center gap-[3px] h-[13px] pl-[6px] shrink-0 font-['Liberation_Serif',serif] italic text-[10px] leading-[10px]">
            <button type="button" className="size-[12px] border border-[#6f7983] text-[#58b0ea]">x</button>
            <button type="button" className="w-[11px]">y</button>
            <button type="button" className="w-[11px]">x</button>
            <IconButton name="listDoc" className="w-[11px]" size="size-[9px]" />
          </div>
          <div className="flex justify-between h-[94px] shrink-0 border border-[#56606a] overflow-hidden">
            <ul className="h-[99px] flex flex-col justify-between leading-[12px]">
              <li className="flex items-center h-3 pl-[4px] gap-[3px]">
                <button type="button" aria-label="Collapse" className="size-[6px] bg-white flex items-center">
                  <span className="w-[4px] h-px mx-auto bg-[#444d59]" />
                </button>
                <Icon name="folder" className="size-[9px]" />
                变量样例
              </li>
              {VARS.map((v, i) => (
                <li key={v} className="flex h-3 pl-[24px]">
                  <span className={clsx("w-[11px] text-[10px] font-bold text-[#4fa9e4] font-['Liberation_Serif',serif]", i > 0 && "italic")}>
                    {i > 0 ? "x" : "k"}
                  </span>
                  {v}
                </li>
              ))}
            </ul>
            <div className="w-[11px] flex flex-col items-center justify-between bg-[#383f48] pt-[2px] pb-[2px]">
              <Chevron up />
              <span className="w-[10px] h-[54px] -mt-[21px] bg-[#505b64]" />
              <Chevron />
            </div>
          </div>
          <h4 className="h-[13px] shrink-0 pl-[2px] text-[8px] leading-[13px]">详细信息</h4>
          <div className="flex-1 ml-[2px] mr-px border border-b-0 border-[#56606a]" />
        </div>
        <div className="w-[10px] ml-[4px] mt-[17px] py-[2px] flex flex-col items-center bg-[#3a424c]">
          <Chevron up />
          <span className="w-[9px] h-[48px] mt-[3px] bg-[#535e67]" />
          <span className="flex-1" />
          <Chevron />
        </div>
      </div>
    </aside>
  );
}

function StatusBar() {
  return (
    <footer className="flex items-center justify-end h-[18px] pr-[3px] bg-[#2e363f] border-b border-[#8d959c] text-[8px] text-[#b5bdc5] font-['Liberation_Mono',monospace]">
      <span className="size-[11px] bg-[#f4eefa] flex items-center justify-center">
        <Logo className="size-[9px]" />
      </span>
      <IconButton name="scaleMark" size="size-[11px]" className="ml-[4px]" />
      <span className="ml-px">1:1</span>
      <Tri className="w-[6px] ml-[3px] text-white" />
      <div className="flex gap-[4px] ml-[7px]">
        <IconButton name="scaleVis" size="size-[11px]" />
        <IconButton name="scaleAuto" size="size-[11px]" />
        <IconButton name="gear" size="size-[11px]" />
        <IconButton name="full" size="size-[11px]" />
      </div>
    </footer>
  );
}

function Watermark() {
  return (
    <div className="absolute right-[34px] bottom-[27px] flex items-center gap-[7px] pointer-events-none text-[#a8afb6] opacity-90">
      <svg viewBox="0 0 42 34" className="w-[42px] h-[34px]" aria-hidden="true">
        <path d="M15 0C6.500 0 0 5.500 0 12.500c0 4 2 7 5.500 9.500L4.500 26l5-2.500c2 .6 4 .9 6.500.8A11 11 0 0 1 15.500 21C15.500 14.500 21.500 10 29 10h1C28.500 4 22.500 0 15 0z" fill="#b7bbbe" />
        <path d="M28.500 11.500c-7 0-12 4.500-12 10s5 10 12 10c1.500 0 3-.2 4.300-.6l4 2.300-1-3.500c3.200-2 4.900-5 4.900-8.200 0-5.500-5.200-10-12.200-10z" fill="#b7bbbe" />
        <g fill="#3a424b">
          <circle cx="10" cy="8.500" r="1.800" />
          <circle cx="20" cy="8.500" r="1.800" />
          <circle cx="24.500" cy="18.500" r="1.500" />
          <circle cx="33" cy="18.500" r="1.500" />
        </g>
      </svg>
      <p className="flex items-center text-[31px] leading-[36px] font-['Noto_Sans_CJK_SC',sans-serif]">
        <span>公众号</span>
        <span className="size-[4px] mx-[14px] rounded-full bg-current" />
        <span>最全软件管家</span>
      </p>
    </div>
  );
}

export default function App() {
  return (
    <div className="relative flex flex-col h-screen overflow-hidden bg-[#303841] font-['Open_Sans','Noto_Sans_CJK_SC',sans-serif]">
      <TitleBar />
      <MenuBar />
      <Toolbars />
      <main className="flex-1 min-h-0 flex">
        <div className="flex-1 min-w-0 flex flex-col">
          <div className="flex-1 min-h-0 flex">
            <SideTools names={DRAW} className="w-[16px] mr-px self-start pb-[2px]" />
            <Drawing />
            <div className="w-[16px] ml-px mr-[3px]">
              <SideTools names={MODIFY} />
              <SideTools names={["front", "back", "above", "below"]} className="mt-px pb-px" />
            </div>
          </div>
          <div className="pr-[3px]">
            <CommandLine />
          </div>
        </div>
        <Properties />
        <Calculator />
      </main>
      <StatusBar />
      <Watermark />
    </div>
  );
}
